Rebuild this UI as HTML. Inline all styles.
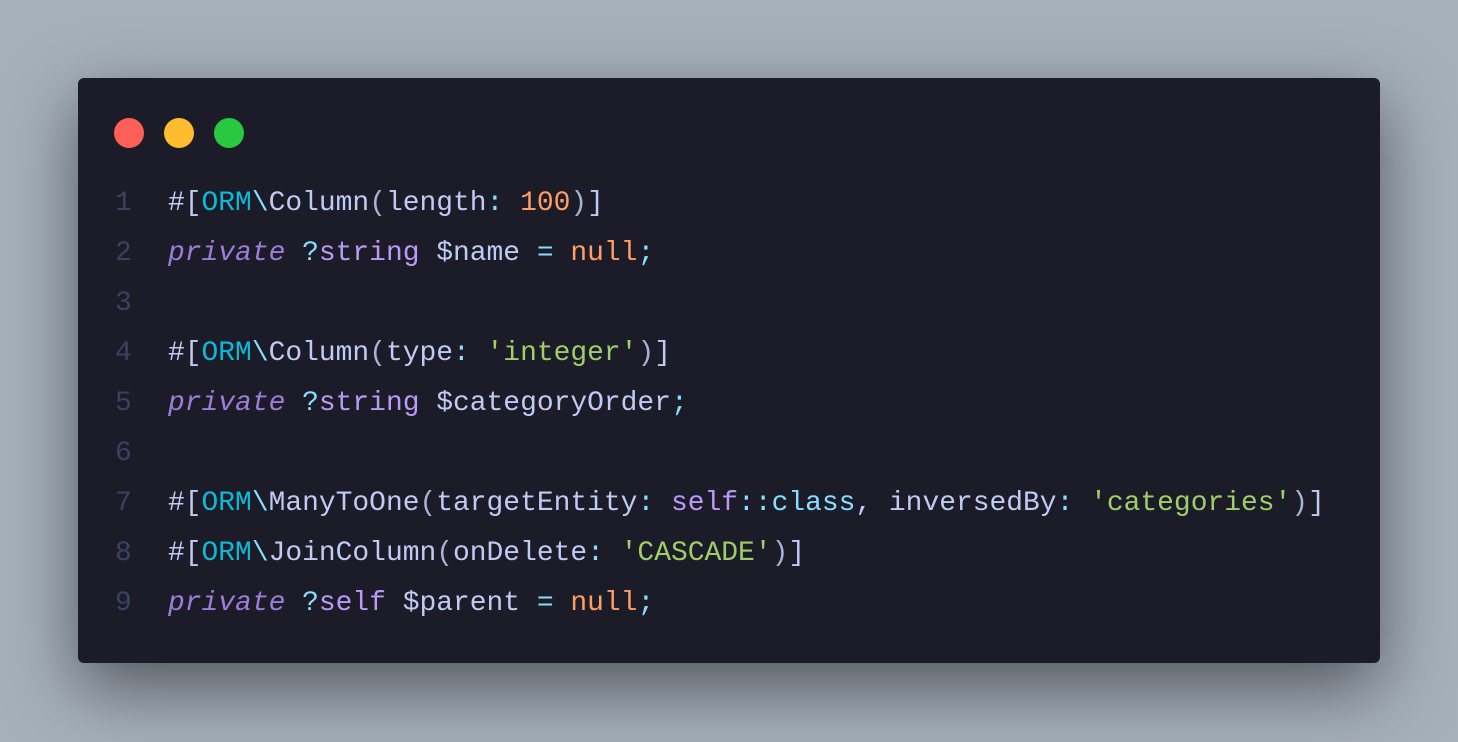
<!DOCTYPE html>
<html><head><style>
html,body{margin:0;padding:0;width:1458px;height:742px;background:#a6b0bb;overflow:hidden}
.win{position:absolute;left:78px;top:78px;width:1302px;height:585px;background:#1c1c28;border-radius:6px;box-shadow:0 25px 70px rgba(0,0,0,.5)}
.dot{position:absolute;top:40px;width:30px;height:30px;border-radius:50%}
pre{position:absolute;left:0;top:101px;margin:0;font-family:"Liberation Mono",monospace;font-size:27.95px;line-height:50px;color:#c0caf5}
.ln{display:inline-block;width:90px;color:#3b4261;text-align:left;padding-left:37px;box-sizing:border-box}
.o{color:#0db9d7}.b{color:#89ddff}.p{color:#a9b1d6}.n{color:#ff9e64}.k{color:#9d7cd8;font-style:italic}.t{color:#bb9af7}.s{color:#9ece6a}
</style></head><body>
<div class="win">
<div class="dot" style="left:36px;background:#ff5f57"></div>
<div class="dot" style="left:86px;background:#febc2e"></div>
<div class="dot" style="left:136px;background:#28c840"></div>
<pre><span class="ln">1</span>#[<span class="o">ORM</span><span class="b">\</span>Column<span class="p">(</span>length<span class="b">:</span> <span class="n">100</span><span class="p">)</span>]
<span class="ln">2</span><span class="k">private</span> <span class="b">?</span><span class="t">string</span> $name <span class="b">=</span> <span class="n">null</span><span class="b">;</span>
<span class="ln">3</span>
<span class="ln">4</span>#[<span class="o">ORM</span><span class="b">\</span>Column<span class="p">(</span>type<span class="b">:</span> <span class="s">'integer'</span><span class="p">)</span>]
<span class="ln">5</span><span class="k">private</span> <span class="b">?</span><span class="t">string</span> $categoryOrder<span class="b">;</span>
<span class="ln">6</span>
<span class="ln">7</span>#[<span class="o">ORM</span><span class="b">\</span>ManyToOne<span class="p">(</span>targetEntity<span class="b">:</span> <span class="t">self</span><span class="b">::</span><span class="b">class</span>, inversedBy<span class="b">:</span> <span class="s">'categories'</span><span class="p">)</span>]
<span class="ln">8</span>#[<span class="o">ORM</span><span class="b">\</span>JoinColumn<span class="p">(</span>onDelete<span class="b">:</span> <span class="s">'CASCADE'</span><span class="p">)</span>]
<span class="ln">9</span><span class="k">private</span> <span class="b">?</span><span class="t">self</span> $parent <span class="b">=</span> <span class="n">null</span><span class="b">;</span></pre>
</div>
</body></html>
